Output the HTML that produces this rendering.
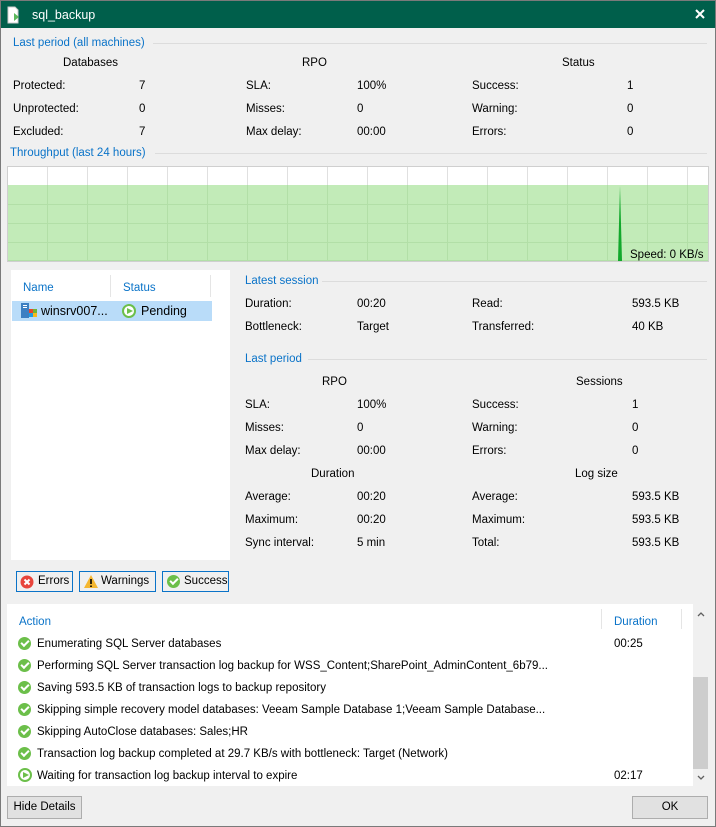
<!DOCTYPE html>
<html><head><meta charset="utf-8"><style>
*{margin:0;padding:0;box-sizing:border-box}
body{width:716px;height:827px;overflow:hidden;background:#f0f0f0;font:11.5px "Liberation Sans",sans-serif;color:#000;position:relative}
.a{position:absolute;white-space:nowrap;line-height:16px}
.b{color:#0a73c8}
.hl{position:absolute;height:1px;background:#dcdcdc}
.ok{display:inline-block;width:13px;height:13px;border-radius:50%;background:#6cbf4a;position:absolute}
.ok:after{content:"";position:absolute;left:3px;top:3px;width:6px;height:3px;border-left:2px solid #fff;border-bottom:2px solid #fff;transform:rotate(-45deg)}
.pl{display:inline-block;width:14px;height:14px;border-radius:50%;border:2px solid #6cbf4a;background:#fff;position:absolute}
.pl:after{content:"";position:absolute;left:3px;top:2px;border-left:6px solid #6cbf4a;border-top:3.5px solid transparent;border-bottom:3.5px solid transparent}
.btn{position:absolute;border:1px solid #0a73c8;background:#f0f0f0;height:21px;line-height:19px}
</style></head><body>
<div style="position:absolute;left:0;top:0;width:716px;height:827px;border:1px solid #7a7a7a"></div>
<div style="position:absolute;left:1px;top:1px;width:714px;height:27px;background:#005f4b"></div>
<svg style="position:absolute;left:7px;top:6px" width="14" height="18"><path d="M1 1h7l3 3v13H1z" fill="#fff" stroke="#ccc"/><path d="M7 7l5 4-5 4z" fill="#5cb85c"/></svg>
<div class="a" style="left:32px;top:7px;color:#fff;font-size:12.5px">sql_backup</div>
<svg style="position:absolute;left:695px;top:9px" width="10" height="10"><path d="M1 1l8 8M9 1l-8 8" stroke="#fff" stroke-width="2"/></svg>

<div class="a b" style="left:13px;top:35px">Last period (all machines)</div><div class="hl" style="left:153px;top:43px;width:554px"></div>
<div class="a" style="left:63px;top:55px">Databases</div>
<div class="a" style="left:302px;top:55px">RPO</div>
<div class="a" style="left:562px;top:55px">Status</div>
<div class="a" style="left:13px;top:78px">Protected:</div><div class="a" style="left:139px;top:78px">7</div>
<div class="a" style="left:246px;top:78px">SLA:</div><div class="a" style="left:357px;top:78px">100%</div>
<div class="a" style="left:472px;top:78px">Success:</div><div class="a" style="left:627px;top:78px">1</div>
<div class="a" style="left:13px;top:101px">Unprotected:</div><div class="a" style="left:139px;top:101px">0</div>
<div class="a" style="left:246px;top:101px">Misses:</div><div class="a" style="left:357px;top:101px">0</div>
<div class="a" style="left:472px;top:101px">Warning:</div><div class="a" style="left:627px;top:101px">0</div>
<div class="a" style="left:13px;top:124px">Excluded:</div><div class="a" style="left:139px;top:124px">7</div>
<div class="a" style="left:246px;top:124px">Max delay:</div><div class="a" style="left:357px;top:124px">00:00</div>
<div class="a" style="left:472px;top:124px">Errors:</div><div class="a" style="left:627px;top:124px">0</div>
<div class="a b" style="left:10px;top:145px">Throughput (last 24 hours)</div><div class="hl" style="left:155px;top:153px;width:552px"></div>

<svg style="position:absolute;left:7px;top:166px" width="702" height="96">
<rect x="0.5" y="0.5" width="701" height="95" fill="#fff" stroke="#cfcfcf"/>
<rect x="1" y="19" width="700" height="76" fill="#c2ebb8"/>
<g stroke="#e0e0e0"><path d="M40.5 1v18M80.5 1v18M120.5 1v18M160.5 1v18M200.5 1v18M240.5 1v18M280.5 1v18M320.5 1v18M360.5 1v18M400.5 1v18M440.5 1v18M480.5 1v18M520.5 1v18M560.5 1v18M600.5 1v18M640.5 1v18M680.5 1v18"/></g>
<g stroke="#b2dfa7"><path d="M40.5 19v76M80.5 19v76M120.5 19v76M160.5 19v76M200.5 19v76M240.5 19v76M280.5 19v76M320.5 19v76M360.5 19v76M400.5 19v76M440.5 19v76M480.5 19v76M520.5 19v76M560.5 19v76M600.5 19v76M640.5 19v76M680.5 19v76M1 38.5h700M1 57.5h700M1 76.5h700M1 94.5h700"/></g>
<path d="M611 95L613 20L615 95z" fill="#12a82c"/>
</svg>
<div class="a" style="left:630px;top:247px">Speed: 0 KB/s</div>

<div style="position:absolute;left:11px;top:270px;width:219px;height:290px;background:#fff"></div>
<div class="a b" style="left:23px;top:280px">Name</div><div style="position:absolute;left:110px;top:275px;width:1px;height:22px;background:#e5e5e5"></div>
<div class="a b" style="left:123px;top:280px">Status</div><div style="position:absolute;left:210px;top:275px;width:1px;height:22px;background:#e5e5e5"></div>
<div style="position:absolute;left:12px;top:301px;width:200px;height:20px;background:#b9dcf9"></div>
<svg style="position:absolute;left:20px;top:302px" width="18" height="17"><rect x="1" y="1" width="8" height="15" fill="#3c7fc2"/><rect x="3" y="3" width="4" height="1" fill="#fff"/><rect x="3" y="5" width="4" height="1" fill="#fff"/><rect x="9" y="7" width="4" height="4" fill="#e8452c"/><rect x="13" y="7" width="4" height="4" fill="#6fb536"/><rect x="9" y="11" width="4" height="4" fill="#1f9be0"/><rect x="13" y="11" width="4" height="4" fill="#f7b81a"/></svg>
<div class="a" style="left:41px;top:303px;font-size:12.5px">winsrv007...</div>
<span class="pl" style="left:122px;top:304px"></span>
<div class="a" style="left:141px;top:303px;font-size:12.5px">Pending</div>

<div class="a b" style="left:245px;top:273px">Latest session</div><div class="hl" style="left:322px;top:281px;width:385px"></div>
<div class="a" style="left:245px;top:296px">Duration:</div><div class="a" style="left:357px;top:296px">00:20</div>
<div class="a" style="left:472px;top:296px">Read:</div><div class="a" style="left:632px;top:296px">593.5 KB</div>
<div class="a" style="left:245px;top:319px">Bottleneck:</div><div class="a" style="left:357px;top:319px">Target</div>
<div class="a" style="left:472px;top:319px">Transferred:</div><div class="a" style="left:632px;top:319px">40 KB</div>
<div class="a b" style="left:245px;top:351px">Last period</div><div class="hl" style="left:308px;top:359px;width:399px"></div>
<div class="a" style="left:322px;top:374px">RPO</div><div class="a" style="left:576px;top:374px">Sessions</div>
<div class="a" style="left:245px;top:397px">SLA:</div><div class="a" style="left:357px;top:397px">100%</div><div class="a" style="left:472px;top:397px">Success:</div><div class="a" style="left:632px;top:397px">1</div>
<div class="a" style="left:245px;top:420px">Misses:</div><div class="a" style="left:357px;top:420px">0</div><div class="a" style="left:472px;top:420px">Warning:</div><div class="a" style="left:632px;top:420px">0</div>
<div class="a" style="left:245px;top:443px">Max delay:</div><div class="a" style="left:357px;top:443px">00:00</div><div class="a" style="left:472px;top:443px">Errors:</div><div class="a" style="left:632px;top:443px">0</div>
<div class="a" style="left:311px;top:466px">Duration</div><div class="a" style="left:575px;top:466px">Log size</div>
<div class="a" style="left:245px;top:489px">Average:</div><div class="a" style="left:357px;top:489px">00:20</div><div class="a" style="left:472px;top:489px">Average:</div><div class="a" style="left:632px;top:489px">593.5 KB</div>
<div class="a" style="left:245px;top:512px">Maximum:</div><div class="a" style="left:357px;top:512px">00:20</div><div class="a" style="left:472px;top:512px">Maximum:</div><div class="a" style="left:632px;top:512px">593.5 KB</div>
<div class="a" style="left:245px;top:535px">Sync interval:</div><div class="a" style="left:357px;top:535px">5 min</div><div class="a" style="left:472px;top:535px">Total:</div><div class="a" style="left:632px;top:535px">593.5 KB</div>

<div class="btn" style="left:16px;top:571px;width:57px"><svg style="position:absolute;left:3px;top:3px" width="14" height="14"><circle cx="7" cy="7" r="6.5" fill="#e8453c"/><path d="M4.5 4.5l5 5M9.5 4.5l-5 5" stroke="#fff" stroke-width="2"/></svg><span style="position:absolute;left:21px">Errors</span></div>
<div class="btn" style="left:79px;top:571px;width:77px"><svg style="position:absolute;left:3px;top:2px" width="16" height="15"><path d="M8 1L15 14H1z" fill="#f5b731"/><path d="M8 5v5M8 11.5v1.5" stroke="#000" stroke-width="1.6"/></svg><span style="position:absolute;left:21px">Warnings</span></div>
<div class="btn" style="left:162px;top:571px;width:67px"><span class="ok" style="left:4px;top:3px"></span><span style="position:absolute;left:21px">Success</span></div>

<div style="position:absolute;left:7px;top:604px;width:686px;height:182px;background:#fff"></div>
<div style="position:absolute;left:693px;top:604px;width:16px;height:182px;background:#f0f0f0"></div>
<div style="position:absolute;left:693px;top:677px;width:15px;height:92px;background:#cdcdcd"></div>
<svg style="position:absolute;left:697px;top:611px" width="8" height="6"><path d="M1 5l3-3 3 3" stroke="#606060" stroke-width="1.3" fill="none"/></svg>
<svg style="position:absolute;left:697px;top:775px" width="8" height="6"><path d="M1 1l3 3 3-3" stroke="#606060" stroke-width="1.3" fill="none"/></svg>
<div class="a b" style="left:19px;top:614px">Action</div>
<div style="position:absolute;left:601px;top:609px;width:1px;height:20px;background:#e5e5e5"></div>
<div class="a b" style="left:614px;top:614px">Duration</div>
<div style="position:absolute;left:681px;top:609px;width:1px;height:20px;background:#e5e5e5"></div>
<span class="ok" style="left:18px;top:637px"></span><div class="a" style="left:37px;top:636px">Enumerating SQL Server databases</div><div class="a" style="left:614px;top:636px">00:25</div>
<span class="ok" style="left:18px;top:659px"></span><div class="a" style="left:37px;top:658px">Performing SQL Server transaction log backup for  WSS_Content;SharePoint_AdminContent_6b79...</div>
<span class="ok" style="left:18px;top:681px"></span><div class="a" style="left:37px;top:680px">Saving 593.5 KB of transaction logs to backup repository</div>
<span class="ok" style="left:18px;top:703px"></span><div class="a" style="left:37px;top:702px">Skipping  simple recovery model databases: Veeam Sample Database 1;Veeam Sample Database...</div>
<span class="ok" style="left:18px;top:725px"></span><div class="a" style="left:37px;top:724px">Skipping AutoClose databases: Sales;HR</div>
<span class="ok" style="left:18px;top:747px"></span><div class="a" style="left:37px;top:746px">Transaction log backup completed at 29.7 KB/s with bottleneck: Target (Network)</div>
<span class="pl" style="left:18px;top:768px"></span><div class="a" style="left:37px;top:768px">Waiting for transaction log backup interval to expire</div><div class="a" style="left:614px;top:768px">02:17</div>

<div style="position:absolute;left:7px;top:796px;width:75px;height:23px;border:1px solid #adadad;background:#e1e1e1;text-align:center;line-height:21px">Hide Details</div>
<div style="position:absolute;left:632px;top:796px;width:76px;height:23px;border:1px solid #adadad;background:#e1e1e1;text-align:center;line-height:21px">OK</div>
</body></html>
